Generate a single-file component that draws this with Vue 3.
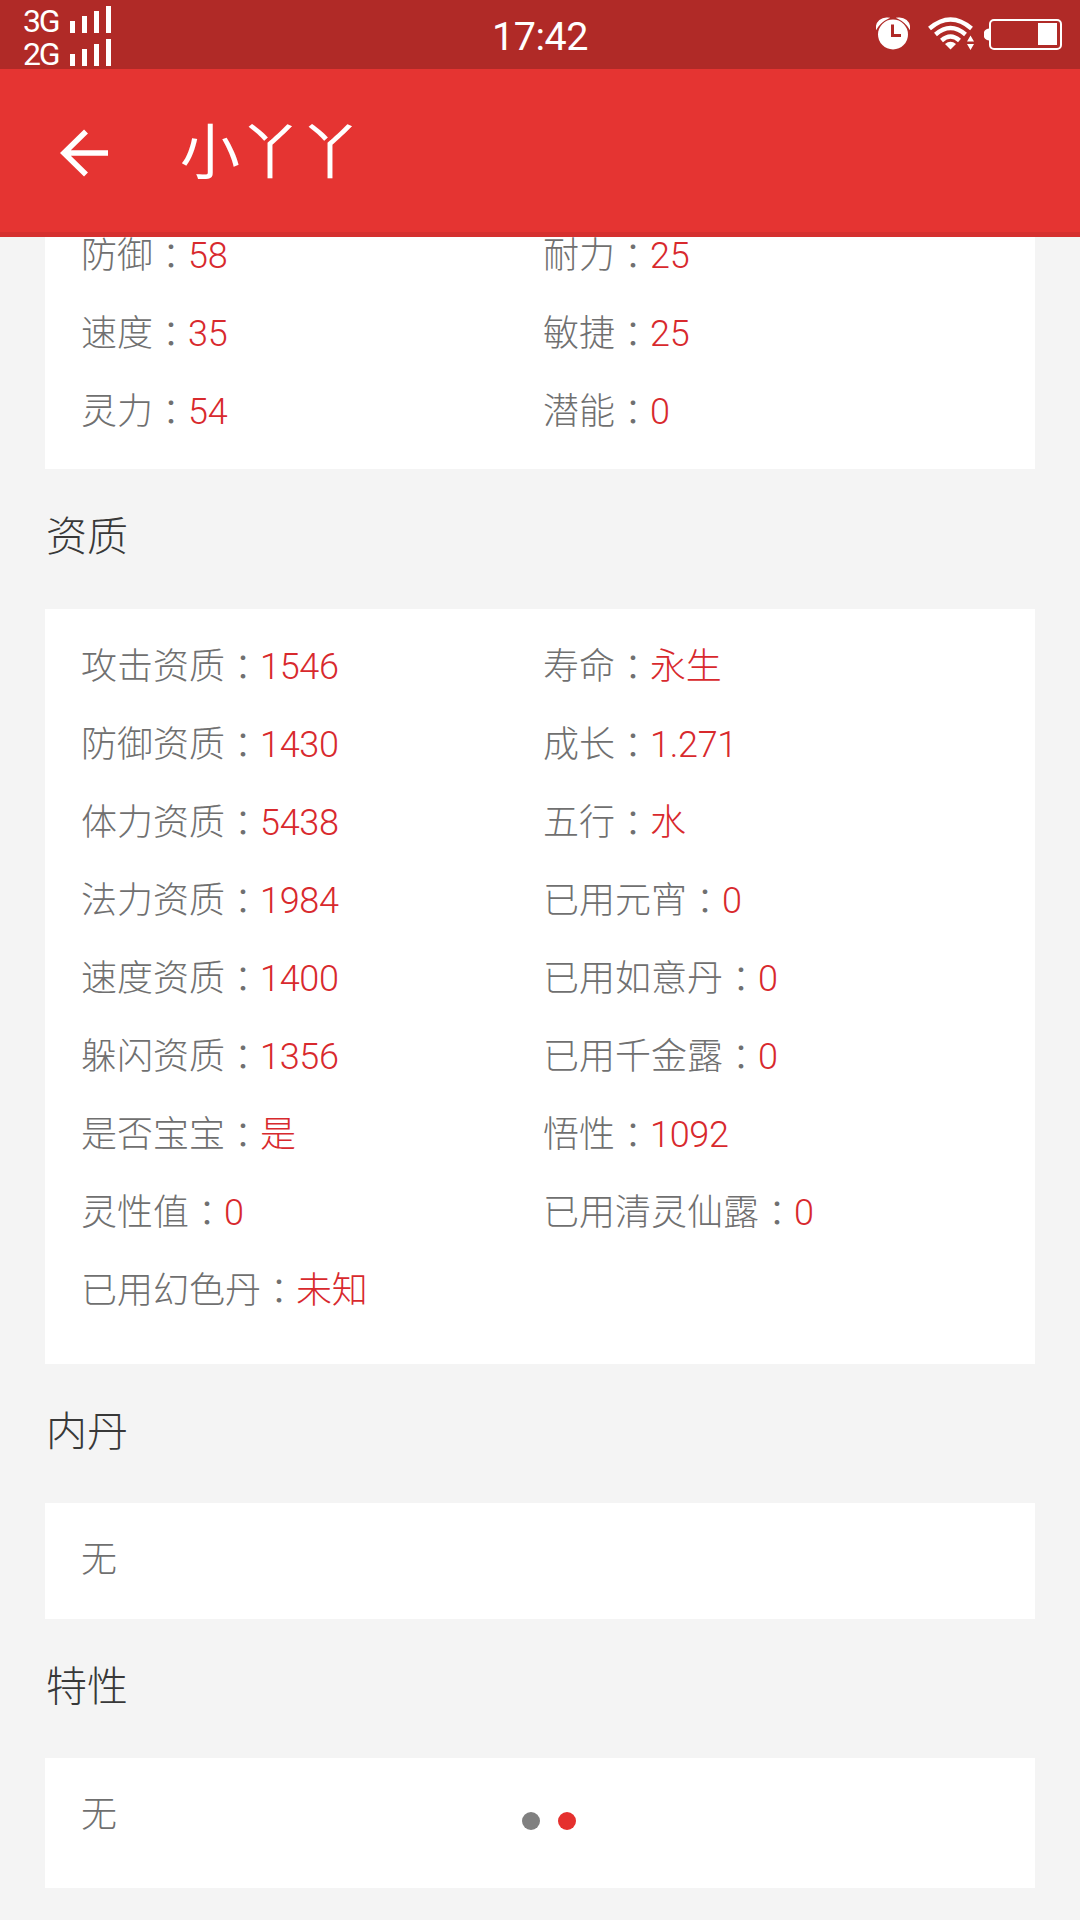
<script setup>
import { ref } from 'vue'

const title = ref('小丫丫')

// 基础属性，每行两列
const attrs = [
  { label: '防御', value: '58' },
  { label: '耐力', value: '25' },
  { label: '速度', value: '35' },
  { label: '敏捷', value: '25' },
  { label: '灵力', value: '54' },
  { label: '潜能', value: '0' }
]

const aptitudes = [
  { label: '攻击资质', value: '1546' },
  { label: '寿命', value: '永生' },
  { label: '防御资质', value: '1430' },
  { label: '成长', value: '1.271' },
  { label: '体力资质', value: '5438' },
  { label: '五行', value: '水' },
  { label: '法力资质', value: '1984' },
  { label: '已用元宵', value: '0' },
  { label: '速度资质', value: '1400' },
  { label: '已用如意丹', value: '0' },
  { label: '躲闪资质', value: '1356' },
  { label: '已用千金露', value: '0' },
  { label: '是否宝宝', value: '是' },
  { label: '悟性', value: '1092' },
  { label: '灵性值', value: '0' },
  { label: '已用清灵仙露', value: '0' },
  { label: '已用幻色丹', value: '未知' }
]

const networks = ['3G', '2G']
const pages = 2
const activePage = ref(1)
</script>

<template>
  <div class="screen">
    <div class="status-bar">
      <div class="signals">
        <div v-for="net in networks" :key="net" class="signal">
          <span class="net">{{ net }}</span>
          <svg width="42" height="27" viewBox="0 0 42 27" fill="#fff">
            <rect x="0" y="15" width="5" height="12" />
            <rect x="12" y="10" width="5" height="17" />
            <rect x="24" y="5" width="5" height="22" />
            <rect x="36" y="0" width="5" height="27" />
          </svg>
        </div>
      </div>
      <div class="clock">17:42</div>
      <div class="status-icons">
        <!-- 闹钟 -->
        <svg class="alarm" width="34" height="33" viewBox="0 0 34 33">
          <circle cx="17" cy="17.5" r="15" fill="#fff" />
          <path d="M0.500 11A10 10 0 0 1 11.500 1.200Q4.500 4.500 0.500 11zM33.500 11A10 10 0 0 0 22.500 1.200Q29.500 4.500 33.500 11z" fill="#fff" stroke="#fff" stroke-width="1.500" />
          <path d="M16.500 7.500V18.500H25" fill="none" stroke="#b02a27" stroke-width="3" />
        </svg>
        <!-- wifi -->
        <svg class="wifi" width="47" height="34" viewBox="0 0 47 34">
          <g fill="none" stroke="#fff" stroke-width="4.400">
            <path d="M1.500 11.500Q22.500 -6.500 43.500 11.500" />
            <path d="M7.500 17.500Q22.500 4.500 37.500 17.500" />
            <path d="M13.500 23.500Q22.500 15.500 31.500 23.500" />
          </g>
          <path d="M17 27Q22.500 22.500 28 27L22.500 32.500z" fill="#fff" />
          <path d="M42.500 18.500L46 24.500H39zM42.500 33L39 27H46z" fill="#fff" />
        </svg>
        <!-- 电池 -->
        <svg class="battery" width="78" height="31" viewBox="0 0 78 31">
          <path d="M5 9.500A5.500 6 0 0 0 5 21.500z" fill="#fff" />
          <rect x="6" y="1" width="71" height="29" rx="4" fill="none" stroke="#fff" stroke-width="2" />
          <rect x="54" y="4" width="19" height="22" fill="#fff" />
        </svg>
      </div>
    </div>

    <header class="app-bar">
      <svg class="back" width="48" height="48" viewBox="0 0 48 48" fill="none" stroke="#fff" stroke-width="5.600">
        <path d="M26 2.500L4 24L26 45.500M4 24H48" />
      </svg>
      <h1>{{ title }}</h1>
    </header>

    <main class="content">
      <section class="card attrs">
        <div v-for="item in attrs" :key="item.label" class="cell">
          <span>{{ item.label }}</span><span class="colon">：</span><span class="value">{{ item.value }}</span>
        </div>
      </section>

      <h2>资质</h2>
      <section class="card aptitudes">
        <div v-for="item in aptitudes" :key="item.label" class="cell">
          <span>{{ item.label }}</span><span class="colon">：</span><span class="value">{{ item.value }}</span>
        </div>
      </section>

      <h2>内丹</h2>
      <section class="card empty">无</section>

      <h2>特性</h2>
      <section class="card empty last">无</section>
    </main>

    <div class="dots">
      <i v-for="n in pages" :key="n" :class="{ active: activePage === n - 1 }"></i>
    </div>
  </div>
</template>

<style>
body {
  margin: 0;
  background: #f4f4f4;
}
</style>

<style scoped>
.screen {
  position: relative;
  display: flex;
  flex-direction: column;
  width: 1080px;
  height: 1920px;
  overflow: hidden;
  background: #f4f4f4;
  font-family: Roboto, "Noto Sans CJK SC", sans-serif;
  font-weight: 300;
}

.status-bar {
  flex: none;
  display: grid;
  grid-template-columns: 1fr auto 1fr;
  height: 69px;
  background: #b02a27;
  color: #fff;
  font-weight: 400;
}

.signals {
  padding: 6px 0 0 23px;
}

.signal {
  display: flex;
  height: 33px;
}

.net {
  width: 47px;
  font-size: 32px;
  line-height: 31px;
  letter-spacing: -2.2px;
}

.clock {
  font-size: 39.5px;
  line-height: 73px;
  letter-spacing: -0.5px;
}

.status-icons {
  display: flex;
  justify-content: flex-end;
  padding: 17px 18px 0 0;
}

.wifi {
  margin-left: 18px;
}

.battery {
  margin: 2px 0 0 9px;
}

.app-bar {
  flex: none;
  display: flex;
  align-items: center;
  box-sizing: border-box;
  height: 168px;
  padding: 4px 0 0 60px;
  border-bottom: 5px solid #d5302f;
  background: #e53432;
  color: #fff;
}

h1 {
  margin: 2px 0 0 72px;
  font-size: 60px;
  font-weight: 400;
  line-height: 80px;
}

.content {
  flex: 1;
  min-height: 0;
  overflow: hidden;
  padding: 0 45px;
}

.card {
  display: grid;
  grid-template-columns: 462px 1fr;
  padding: 15px 36px 38px;
  background: #fff;
  color: #707070;
  font-size: 36px;
}

/* 列表已滚动，首行部分被标题栏遮住 */
.attrs {
  margin-top: -24px;
  padding: 0 36px 22px;
}

.cell {
  height: 78px;
  line-height: 78px;
  white-space: nowrap;
}

/* 繁体字形的冒号居中 */
.colon {
  position: relative;
  top: 2px;
  font-family: "Noto Sans CJK TC", sans-serif;
}

.value {
  margin-left: -1px;
  color: #d8292d;
  letter-spacing: -0.3px;
}

h2 {
  margin: 0;
  padding-left: 1px;
  color: #383838;
  font-size: 41px;
  font-weight: 300;
  height: 139px;
  line-height: 137px;
}

.attrs + h2 {
  height: 140px;
}

.empty {
  height: 116px;
  padding: 0 36px;
  line-height: 115px;
}

.last {
  height: 130px;
}

.dots {
  position: absolute;
  left: 522px;
  top: 1812px;
  display: flex;
  gap: 18px;
}

.dots i {
  width: 18px;
  height: 18px;
  border-radius: 50%;
  background: #808080;
}

.dots i.active {
  background: #e5302e;
}
</style>
